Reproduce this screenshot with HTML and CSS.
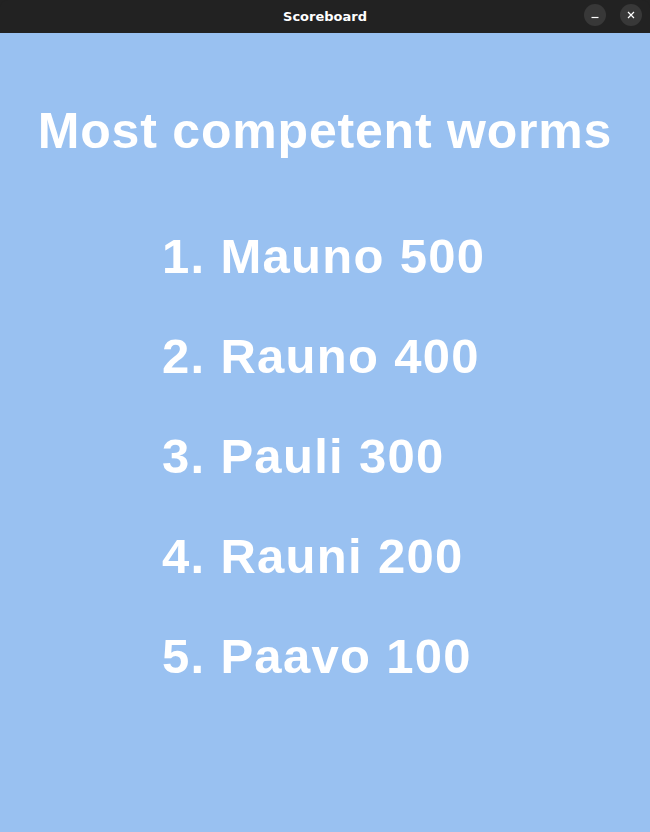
FILE: index.html
```html
<!DOCTYPE html>
<html>
<head>
<meta charset="utf-8">
<link rel="stylesheet" href="styles.css">
</head>
<body>
<div class="window">
  <header class="titlebar">
    <span class="title">Scoreboard</span>
    <div class="controls">
      <span class="btn"><svg width="10" height="10" viewBox="0 0 10 10"><path d="M1.5 7.5h7" stroke="#fff" stroke-width="1.2"/></svg></span>
      <span class="btn"><svg width="10" height="10" viewBox="0 0 10 10"><path d="M2 2l6 6M8 2l-6 6" stroke="#fff" stroke-width="1.2"/></svg></span>
    </div>
  </header>
  <main class="content">
    <h1 class="heading">Most competent worms</h1>
    <ol class="scores">
      <li>1. Mauno 500</li>
      <li>2. Rauno 400</li>
      <li>3. Pauli 300</li>
      <li>4. Rauni 200</li>
      <li>5. Paavo 100</li>
    </ol>
  </main>
</div>
</body>
</html>
```
FILE: styles.css
```css
html, body { margin: 0; padding: 0; background: #222; }
.window { width: 650px; height: 832px; display: flex; flex-direction: column; }
.titlebar {
  height: 33px; background: #222222; border-radius: 8px 8px 0 0;
  display: flex; align-items: center; justify-content: center; position: relative;
}
.title { color: #fff; font-family: "DejaVu Sans", sans-serif; font-weight: bold; font-size: 13px; }
.controls { position: absolute; right: 8px; top: 4px; display: flex; gap: 14px; }
.btn { width: 22px; height: 22px; border-radius: 50%; background: #383838; display: flex; align-items: center; justify-content: center; }
.content { flex: 1; background: #99c1f1; color: #fff; font-family: "Liberation Sans", Arial, sans-serif; font-weight: bold; }
.heading { margin: 0; padding-top: 68px; text-align: center; font-size: 50px; letter-spacing: 0.8px; line-height: 60px; }
.scores { list-style: none; margin: 0; padding: 0 0 0 162px; margin-top: 45px; display: flex; flex-direction: column; }
.scores li { font-size: 49px; line-height: 100px; letter-spacing: 1.3px; }
```
